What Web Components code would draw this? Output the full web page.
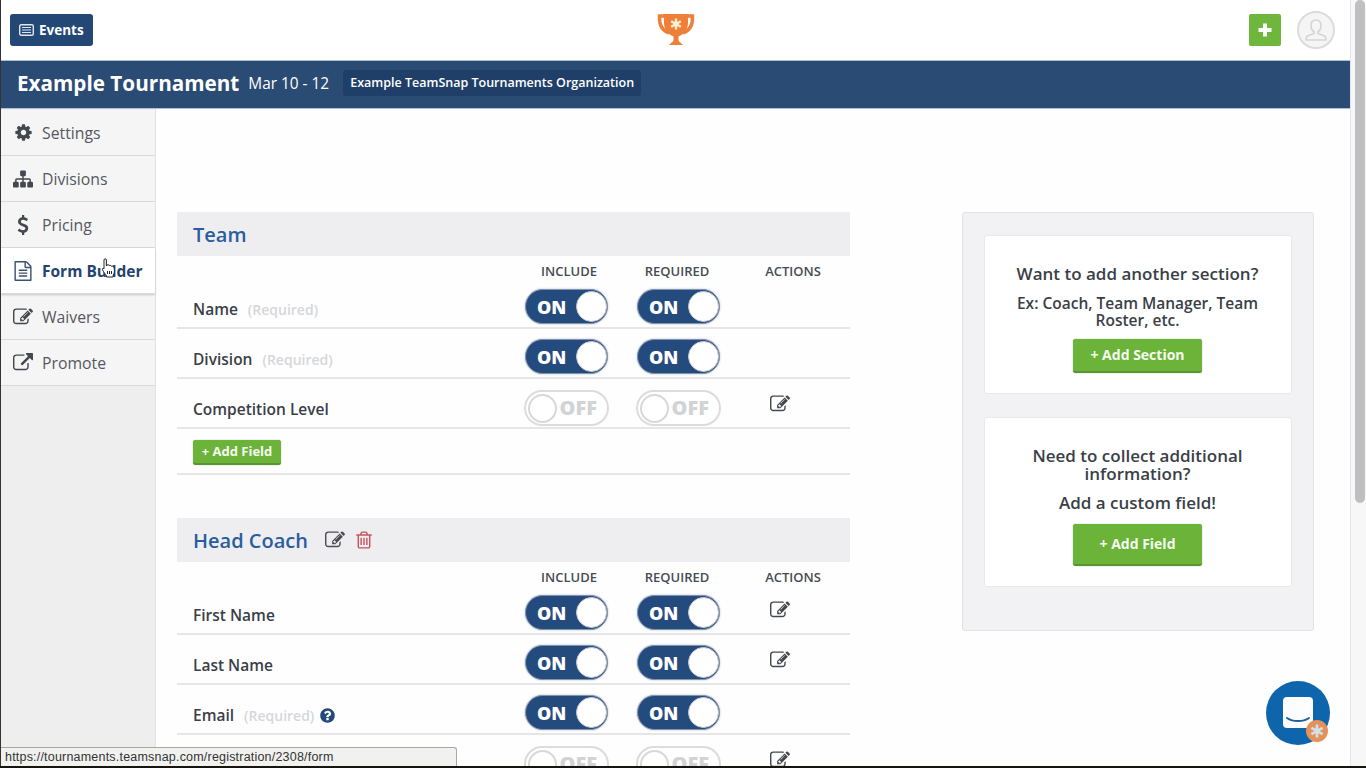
<!DOCTYPE html>
<html>
<head>
<meta charset="utf-8">
<title>Form Builder</title>
<style>
html, body { margin: 0; height: 100%; overflow: hidden; background: #fefeff; }
body { font-family: "Open Sans", "Noto Sans", sans-serif; color: #3a3f47; }
</style>
</head>
<body>
<tournament-app></tournament-app>

<script>
const ICONS = {
  cog: 'M1152 896q0-106-75-181t-181-75-181 75-75 181 75 181 181 75 181-75 75-181zm512-109v222q0 12-8 23t-20 13l-185 28q-19 54-39 91 35 50 107 138 10 12 10 25t-9 23q-27 37-99 108t-94 71q-12 0-26-9l-138-108q-44 23-91 38-16 136-29 186-7 28-36 28h-222q-14 0-24.500-8.500t-11.500-21.500l-28-184q-49-16-90-37l-141 107q-10 9-25 9-14 0-25-11-126-114-165-168-7-10-7-23 0-12 8-23 15-21 51-66.500t54-70.500q-27-50-41-99l-183-27q-13-2-21-12.500t-8-23.500v-222q0-12 8-23t19-13l186-28q14-46 39-92-40-57-107-138-10-12-10-24 0-10 9-23 26-36 98.500-107.500t94.500-71.500q13 0 26 10l138 107q44-23 91-38 16-136 29-186 7-28 36-28h222q14 0 24.500 8.500t11.500 21.500l28 184q49 16 90 37l142-107q9-9 24-9 13 0 25 10 129 119 165 170 7 8 7 22 0 12-8 23-15 21-51 66.500t-54 70.500q26 50 41 98l183 28q13 2 21 12.500t8 23.500z',
  sitemap: 'M1792 1248v320q0 40-28 68t-68 28h-320q-40 0-68-28t-28-68v-320q0-40 28-68t68-28h96v-192h-512v192h96q40 0 68 28t28 68v320q0 40-28 68t-68 28h-320q-40 0-68-28t-28-68v-320q0-40 28-68t68-28h96v-192h-512v192h96q40 0 68 28t28 68v320q0 40-28 68t-68 28h-320q-40 0-68-28t-28-68v-320q0-40 28-68t68-28h96v-192q0-52 38-90t90-38h512v-192h-96q-40 0-68-28t-28-68v-320q0-40 28-68t68-28h320q40 0 68 28t28 68v320q0 40-28 68t-68 28h-96v192h512q52 0 90 38t38 90v192h96q40 0 68 28t28 68z',
  usd: 'M1362 1185q0 153-99.500 263.500t-258.500 136.500v175q0 14-9 23t-23 9h-135q-13 0-22.500-9.500t-9.500-22.500v-175q-66-9-127.500-31t-101.500-44.500-74-48-46.500-37.500-17.500-18q-17-21-2-41l103-135q7-10 23-12 15-2 24 9l2 2q113 99 243 125 37 8 74 8 81 0 142.500-43t61.500-122q0-28-15-53t-33.500-42-58.500-37.500-66-32-80-32.500q-39-16-61.500-25t-61.500-26.500-62.500-31-56.500-35.500-53.500-42.500-43.500-49-35.500-58-21-66.500-8.500-78q0-138 98-242t255-134v-180q0-13 9.500-22.500t22.500-9.500h135q14 0 23 9t9 23v176q57 6 110.500 23t87 33.500 63.500 37.500 39 29 15 14q17 18 5 38l-81 146q-8 15-23 16-14 3-27-7-3-3-14.500-12t-39-26.500-58.500-32-74.500-26-85.500-11.500q-95 0-155 43t-60 111q0 26 8.500 48t29.500 41.500 39.500 33 56 31 60.500 27 70 27.500q53 20 81 31.500t76 35 75.500 42.500 62 50 53 63.500 31.500 76.500 13 94z',
  file: 'M1596 380q28 28 48 76t20 88v1152q0 40-28 68t-68 28h-1344q-40 0-68-28t-28-68v-1600q0-40 28-68t68-28h896q40 0 88 20t76 48zm-444-244v376h376q-10-29-22-41l-313-313q-12-12-41-22zm384 1528v-1024h-416q-40 0-68-28t-28-68v-416h-768v1536h1280zm-1024-864q0-14 9-23t23-9h704q14 0 23 9t9 23v64q0 14-9 23t-23 9h-704q-14 0-23-9t-9-23v-64zm736 224q14 0 23 9t9 23v64q0 14-9 23t-23 9h-704q-14 0-23-9t-9-23v-64q0-14 9-23t23-9h704zm0 256q14 0 23 9t9 23v64q0 14-9 23t-23 9h-704q-14 0-23-9t-9-23v-64q0-14 9-23t23-9h704z',
  edit: 'M888 1184l116-116-152-152-116 116v56h96v96h56zm440-720q-16-16-33 1l-350 350q-17 17-1 33t33-1l350-350q17-17 1-33zm80 594v190q0 119-84.500 203.500t-203.500 84.500h-832q-119 0-203.500-84.500t-84.500-203.500v-832q0-119 84.500-203.500t203.500-84.500h832q63 0 117 25 15 7 18 23 3 17-9 29l-49 49q-14 14-32 8-23-6-45-6h-832q-66 0-113 47t-47 113v832q0 66 47 113t113 47h832q66 0 113-47t47-113v-126q0-13 9-22l64-64q15-15 35-7t20 29zm-96-738l288 288-672 672h-288v-288zm444 132l-92 92-288-288 92-92q28-28 68-28t68 28l152 152q28 28 28 68t-28 68z',
  link: 'M1408 928v320q0 119-84.500 203.500t-203.500 84.500h-832q-119 0-203.500-84.500t-84.500-203.500v-832q0-119 84.500-203.500t203.500-84.500h704q14 0 23 9t9 23v64q0 14-9 23t-23 9h-704q-66 0-113 47t-47 113v832q0 66 47 113t113 47h832q66 0 113-47t47-113v-320q0-14 9-23t23-9h64q14 0 23 9t9 23zm384-864v512q0 26-19 45t-45 19-45-19l-176-176-652 652q-10 10-23 10t-23-10l-114-114q-10-10-10-23t10-23l652-652-176-176q-19-19-19-45t19-45 45-19h512q26 0 45 19t19 45z',
  trash: 'M704 736v576q0 14-9 23t-23 9h-64q-14 0-23-9t-9-23v-576q0-14 9-23t23-9h64q14 0 23 9t9 23zm256 0v576q0 14-9 23t-23 9h-64q-14 0-23-9t-9-23v-576q0-14 9-23t23-9h64q14 0 23 9t9 23zm256 0v576q0 14-9 23t-23 9h-64q-14 0-23-9t-9-23v-576q0-14 9-23t23-9h64q14 0 23 9t9 23zm128 724v-948h-896v948q0 22 7 40.500t14.500 27 10.500 8.500h832q3 0 10.500-8.500t14.500-27 7-40.500zm-672-1076h448l-48-117q-7-9-17-11h-317q-10 2-17 11zm928 32v64q0 14-9 23t-23 9h-96v948q0 83-47 143.500t-113 60.500h-832q-66 0-113-58.500t-47-141.500v-952h-96q-14 0-23-9t-9-23v-64q0-14 9-23t23-9h309l70-167q15-37 54-63t79-26h320q40 0 79 26t54 63l70 167h309q14 0 23 9t9 23z',
  help: 'M1024 1376v-192q0-14-9-23t-23-9h-192q-14 0-23 9t-9 23v192q0 14 9 23t23 9h192q14 0 23-9t9-23zm256-672q0-88-55.500-163t-138.500-116-170-41q-243 0-371 213-15 24 8 42l132 100q7 6 19 6 16 0 25-12 53-68 86-92 34-24 86-24 48 0 85.500 26t37.500 59q0 38-20 61t-68 45q-63 28-115.500 86.500t-52.500 125.500v36q0 14 9 23t23 9h192q14 0 23-9t9-23q0-19 21.500-49.500t54.500-49.500q32-18 49-28.500t46-35 44.500-48 28-60.500 12.500-81zm384 192q0 209-103 385.500t-279.500 279.500-385.500 103-385.500-103-279.500-279.500-103-385.500 103-385.500 279.500-279.500 385.500-103 385.500 103 279.500 279.500 103 385.500z'
};

class FaIcon extends HTMLElement {
  connectedCallback() {
    const size = this.getAttribute('size') || 20;
    const name = this.getAttribute('name');
    this.attachShadow({mode: 'open'}).innerHTML = `<style>
      :host { display: inline-flex; line-height: 0; color: inherit; flex: none; }
    </style>
    <svg width="${size}" height="${size}" viewBox="0 0 1792 1792"><path fill="currentColor" d="${ICONS[name]}"/></svg>`;
  }
}
customElements.define('fa-icon', FaIcon);

class ToggleSwitch extends HTMLElement {
  connectedCallback() {
    const on = this.hasAttribute('on');
    this.attachShadow({mode: 'open'}).innerHTML = `<style>
      :host { display: block; width: ${on ? 83 : 85}px; margin-left: ${on ? 0 : -1}px; margin-top: ${on ? 0 : 1}px; }
      .sw { box-sizing: border-box; height: ${on ? 35 : 36}px; border-radius: 19px; display: flex; align-items: center;
        justify-content: space-between; font: 800 ${on ? 18 : 20}px/1 "Open Sans", sans-serif; }
      .on { background: #234b7e; border: 1.5px solid #8b93a3; padding: 0 0 0 11px; color: #fff; box-shadow: 0 0 2px #9fb6d6; }
      .off { background: #fff; border: 2px solid #dcdcde; padding: 0 10px 0 2px; color: #d2d3d5; }
      .knob { width: 31px; height: 31px; border-radius: 50%; background: #fff; flex: none; box-sizing: border-box; }
      .on .knob { border: 1px solid #c4c8d0; }
      .off .knob { width: 29px; height: 29px; border: 2px solid #d8d8da; }
    </style>
    ${on ? '<div class="sw on"><span>ON</span><span class="knob"></span></div>'
         : '<div class="sw off"><span class="knob"></span><span>OFF</span></div>'}`;
  }
}
customElements.define('toggle-switch', ToggleSwitch);

class ActionButton extends HTMLElement {
  connectedCallback() {
    const w = this.getAttribute('w'), h = this.getAttribute('h'), fs = this.getAttribute('fs') || 14;
    this.attachShadow({mode: 'open'}).innerHTML = `<style>
      :host { display: inline-block; }
      div { box-sizing: border-box; width: ${w}px; height: ${h}px; background: #6cb33a; color: #f6fbf0; border-radius: 3px;
        border-bottom: 2px solid #5a9630; display: flex; align-items: center; justify-content: center; white-space: pre;
        font: 700 ${fs}px/1 "Open Sans", sans-serif; box-shadow: 0 0 1px #5a7a40; }
    </style><div><slot></slot></div>`;
  }
}
customElements.define('action-button', ActionButton);

class NavItem extends HTMLElement {
  connectedCallback() {
    const active = this.hasAttribute('active');
    this.attachShadow({mode: 'open'}).innerHTML = `<style>
      :host { display: block; }
      a { box-sizing: border-box; height: 46px; display: flex; align-items: center; padding-left: 12px;
        font-size: ${active ? 15.5 : 15.8}px; color: ${active ? '#24436f' : '#55585e'}; font-weight: ${active ? 700 : 400};
        background: ${active ? '#fff' : '#f5f5f6'}; border-bottom: 1px solid #d9d9db;
        ${active ? 'box-shadow: 0 1px 2px #c8c8ca; position: relative;' : ''} }
      fa-icon { width: 20px; justify-content: center; margin-right: 9px; color: ${active ? '#3b5270' : '#44474d'}; }
    </style><a><fa-icon name="${this.getAttribute('icon')}" size="${this.getAttribute('size') || 20}"></fa-icon><slot></slot></a>`;
  }
}
customElements.define('nav-item', NavItem);

const ROW_GRID = 'display: grid; grid-template-columns: 348px 112px 112px 1fr;';

class FieldRow extends HTMLElement {
  connectedCallback() {
    const t = v => v === '1' ? '<toggle-switch on></toggle-switch>' : '<toggle-switch></toggle-switch>';
    const req = this.hasAttribute('required') ? '<small>(Required)</small>' : '';
    const help = this.hasAttribute('help') ? '<fa-icon class="q" name="help" size="17"></fa-icon>' : '';
    const edit = this.hasAttribute('edit') ? '<fa-icon class="e" name="edit" size="20"></fa-icon>' : '';
    this.attachShadow({mode: 'open'}).innerHTML = `<style>
      :host { display: block; }
      .row { ${ROW_GRID} box-sizing: border-box; height: 50px; padding-top: 10px; border-bottom: 2px solid #e6e6e8; align-items: start; }
      .name { padding-left: 16px; font-size: 15.5px; font-weight: 600; color: #3a3f47; display: flex; align-items: center; height: 20px; margin-top: 10px; white-space: nowrap; }
      small { font-size: 14px; font-weight: 600; color: #d6d7da; margin-left: 10px; }
      .q { color: #24497a; margin-left: 5px; }
      .e { color: #44474d; margin: 5px 0 0 21px; }
    </style>
    <div class="row">
      <div class="name"><slot></slot>${req}${help}</div>
      <div>${t(this.getAttribute('inc'))}</div>
      <div>${t(this.getAttribute('rq'))}</div>
      <div>${edit}</div>
    </div>`;
  }
}
customElements.define('field-row', FieldRow);

class FormSection extends HTMLElement {
  connectedCallback() {
    const tools = this.hasAttribute('tools') ? `
      <fa-icon class="ed" name="edit" size="20"></fa-icon><fa-icon class="tr" name="trash" size="20"></fa-icon>` : '';
    this.attachShadow({mode: 'open'}).innerHTML = `<style>
      :host { display: block; }
      header { height: 44px; background: #eeeef0; display: flex; align-items: center; padding-left: 16px; }
      h2 { margin: 0; font-size: 20px; font-weight: 600; color: #2a5d9e; }
      .ed { color: #4a4d52; margin-left: 17px; }
      .tr { color: #c9545e; margin-left: 9px; }
      .cols { ${ROW_GRID} box-sizing: border-box; height: 23px; padding-top: 6px; align-items: start; font-size: 13px; line-height: 18px; font-weight: 600; color: #474b52; }
      .cols span { text-align: center; }
      .cols .i { width: 88px; } .cols .r { width: 80px; } .cols .a { width: 88px; }
    </style>
    <header><h2>${this.getAttribute('title')}</h2>${tools}</header>
    <div class="cols"><i></i><span class="i">INCLUDE</span><span class="r">REQUIRED</span><span class="a">ACTIONS</span></div>
    <slot></slot>`;
  }
}
customElements.define('form-section', FormSection);

class HelpCard extends HTMLElement {
  connectedCallback() {
    this.attachShadow({mode: 'open'}).innerHTML = `<style>
      :host { display: block; }
      div { box-sizing: border-box; background: #fff; border: 1px solid #e8e8ea; border-radius: 3px; text-align: center;
        height: ${this.getAttribute('h')}px; padding: ${this.getAttribute('pad')}px 15px 0 14px; color: #3a3f47; font-weight: 600; }
    </style><div><slot></slot></div>`;
  }
}
customElements.define('help-card', HelpCard);

class TopBar extends HTMLElement {
  connectedCallback() {
    this.attachShadow({mode: 'open'}).innerHTML = `<style>
      :host { display: flex; height: 60px; flex: none; align-items: center; background: #fff; padding: 0 15px 0 9px; position: relative; }
      .events { box-sizing: border-box; width: 83px; height: 32px; background: #234876; border-radius: 3px; color: #fff; display: flex;
        align-items: center; gap: 5px; padding-left: 9px; font: 700 13.5px/1 "Open Sans", sans-serif; }
      .events span { margin-top: 2px; }
      .mid { flex: 1; display: flex; justify-content: center; margin-left: 9px; }
      .plus { width: 32px; height: 32px; background: #6fb63c; border-radius: 2px; display: flex; align-items: center; justify-content: center; }
      .avatar { box-sizing: border-box; width: 38px; height: 38px; margin-left: 16px; border-radius: 50%; border: 2px solid #dcdcde; background: #f5f5f6;
        display: flex; align-items: center; justify-content: center; }
    </style>
    <div class="events">
      <svg width="15" height="12" viewBox="0 0 15 12"><rect x=".7" y=".7" width="13.600" height="10.600" rx="1.500" fill="none" stroke="#dfe6f0" stroke-width="1.400"/><path d="M3 3.500h9M3 6h9M3 8.500h9" stroke="#dfe6f0" stroke-width="1.200"/></svg>
      <span>Events</span>
    </div>
    <div class="mid">
      <svg width="40" height="34" viewBox="0 0 40 34">
        <path d="M9 3H3.500C3 13 7 18 13 20M31 3h5.500C37 13 33 18 27 20" fill="none" stroke="#ee7f38" stroke-width="3.400"/>
        <path d="M8 1h24v9c0 8-6 12-9.500 13.500V27c0 2 3 3 4.500 5H13c1.500-2 4.500-3 4.500-5v-3.500C14 22 8 18 8 10z" fill="#ee7f38"/>
        <path d="M20 5.500v11M15.200 8.200l9.600 5.600M24.800 8.200l-9.600 5.600" stroke="#fdf0d4" stroke-width="2.400"/>
      </svg>
    </div>
    <div class="plus"><svg width="16" height="16" viewBox="0 0 16 16"><path d="M8 1.500v13M1.500 8h13" stroke="#fff" stroke-width="4"/></svg></div>
    <div class="avatar"><svg width="24" height="26" viewBox="0 0 24 26" fill="none" stroke="#d4d4d6" stroke-width="1.600"><path d="M12 3c-3 0-5 2.200-5 5.500 0 2.500 1 5 3 6v2L3.500 19c-1 .5-1.500 1.500-1.500 4h20c0-2.500-.5-3.500-1.500-4L14 16.500v-2c2-1 3-3.500 3-6C17 5.200 15 3 12 3z"/></svg></div>`;
  }
}
customElements.define('top-bar', TopBar);

class TitleBar extends HTMLElement {
  connectedCallback() {
    this.attachShadow({mode: 'open'}).innerHTML = `<style>
      :host { display: flex; align-items: center; box-sizing: border-box; height: 49px; flex: none; background: #2a4b73;
        border-top: 1px solid #a9c0d8; border-bottom: 1px solid #a9c0d8; padding: 0 0 4px 16px; color: #fff; white-space: nowrap; }
      b { font-size: 20.7px; font-weight: 700; }
      span { font-size: 15.4px; margin-left: 9px; padding-top: 2px; }
      em { font: 600 12.5px/26px "Open Sans", sans-serif; background: #1f3f69; border-radius: 3px; padding: 0 7px; margin-left: 14px; }
    </style>
    <b>Example Tournament</b><span>Mar 10 - 12</span><em>Example TeamSnap Tournaments Organization</em>`;
  }
}
customElements.define('title-bar', TitleBar);

class ChatLauncher extends HTMLElement {
  connectedCallback() {
    this.attachShadow({mode: 'open'}).innerHTML = `<style>
      :host { position: absolute; left: 1265px; top: 681px; width: 66px; height: 66px; }
    </style>
    <svg width="66" height="66" viewBox="0 0 66 66">
      <circle cx="33" cy="32" r="32" fill="#0f65ab"/>
      <rect x="18" y="16" width="30" height="31" rx="4" fill="#fdfdff"/>
      <path d="M22 37c6 4 16 4 22 0" fill="none" stroke="#1b5f9c" stroke-width="2" stroke-linecap="round"/>
      <circle cx="52" cy="50" r="11" fill="#e5925a"/>
      <path d="M52 43.500v13M46.400 46.800l11.200 6.400M57.600 46.800l-11.200 6.400" stroke="#d3e2ea" stroke-width="2.600"/>
    </svg>`;
  }
}
customElements.define('chat-launcher', ChatLauncher);

class StatusTip extends HTMLElement {
  connectedCallback() {
    this.attachShadow({mode: 'open'}).innerHTML = `<style>
      :host { position: absolute; left: 1px; top: 747px; box-sizing: border-box; width: 456px; height: 19px; background: #f1f1ef;
        border: 1px solid #a8a8a8; border-left: 0; border-bottom: 0; border-radius: 0 3px 0 0; padding-left: 4px;
        font: 12.5px/18px "Liberation Sans", Arial, sans-serif; color: #333; letter-spacing: .2px; }
    </style><slot></slot>`;
  }
}
customElements.define('status-tip', StatusTip);

class HandCursor extends HTMLElement {
  connectedCallback() {
    this.attachShadow({mode: 'open'}).innerHTML = `<style>
      :host { position: absolute; left: 101px; top: 258px; width: 16px; height: 20px; line-height: 0; }
    </style>
    <svg width="16" height="20" viewBox="0 0 16 20"><path d="M3 2c0-1.600 2.400-1.600 2.400 0v6l.6-1c1-.6 2-.2 2.200.6.8-.6 2-.2 2.200.7 1-.4 2.200 0 2.400 1l.4 1.200c.6 2 .2 5-1 6.500v2H5.500v-1.500C4 16 3 14.500 1.500 12 .8 10.800 2 9.800 3 10.800z" fill="#fff" stroke="#222" stroke-width="1"/><path d="M6.500 13v3M8.500 13v3M10.500 13v3" stroke="#222" stroke-width="1"/></svg>`;
  }
}
customElements.define('hand-cursor', HandCursor);

class TournamentApp extends HTMLElement {
  connectedCallback() {
    this.attachShadow({mode: 'open'}).innerHTML = `<style>
      :host { display: flex; flex-direction: column; height: 768px; width: 1366px; position: relative; overflow: hidden; background: #fefeff; }
      .window { flex: 1; min-height: 0; display: flex; }
      .page { flex: 1; min-width: 0; display: flex; flex-direction: column; border-left: 1px solid #333; }
      .body { flex: 1; min-height: 0; display: flex; overflow: hidden; }
      nav { width: 154px; flex: none; background: #eeeeef; border-right: 1px solid #e2e2e4; padding-top: 1px; }
      main { flex: 1; display: flex; padding: 103px 0 0 21px; align-items: flex-start; min-width: 0; }
      .form { width: 673px; flex: none; }
      .gap { height: 43px; }
      .add { height: 46px; box-sizing: border-box; padding: 11px 0 0 16px; border-bottom: 2px solid #e6e6e8; line-height: 0; }
      aside { box-sizing: border-box; width: 352px; flex: none; margin-left: 112px; height: 419px; background: #f2f2f4; border: 1px solid #e2e2e4; border-radius: 3px;
        padding: 22px 21px; display: flex; flex-direction: column; gap: 23px; }
      h3 { margin: 0 0 12px; font-size: 17px; line-height: 18px; font-weight: 600; }
      p { margin: 0 0 10px; font-size: 15.5px; line-height: 17px; font-weight: 600; }
      p.sub { font-size: 17px; line-height: 20px; margin: -2px 0 11px; }
      .scroll { width: 16px; flex: none; background: #f7f7f8; border-left: 1px solid #e6e6e8; box-sizing: border-box; padding: 0 1px 0 4px; }
      .thumb { height: 503px; background: #bfbfc1; border-radius: 5px; }
      .desk { height: 2px; flex: none; background: #17150f; }
    </style>
    <div class="window">
      <div class="page">
        <top-bar></top-bar>
        <title-bar></title-bar>
        <div class="body">
          <nav>
            <nav-item icon="cog" size="19">Settings</nav-item>
            <nav-item icon="sitemap">Divisions</nav-item>
            <nav-item icon="usd" size="22">Pricing</nav-item>
            <nav-item icon="file" active>Form Builder</nav-item>
            <nav-item icon="edit" size="22">Waivers</nav-item>
            <nav-item icon="link" size="22">Promote</nav-item>
          </nav>
          <main>
            <div class="form">
              <form-section title="Team">
                <field-row inc="1" rq="1" required>Name</field-row>
                <field-row inc="1" rq="1" required>Division</field-row>
                <field-row inc="0" rq="0" edit>Competition Level</field-row>
                <div class="add"><action-button w="88" h="25" fs="13">+ Add Field</action-button></div>
              </form-section>
              <div class="gap"></div>
              <form-section title="Head Coach" tools>
                <field-row inc="1" rq="1" edit>First Name</field-row>
                <field-row inc="1" rq="1" edit>Last Name</field-row>
                <field-row inc="1" rq="1" required help>Email</field-row>
                <field-row inc="0" rq="0" edit></field-row>
              </form-section>
            </div>
            <aside>
              <help-card h="159" pad="29">
                <h3>Want to add another section?</h3>
                <p>Ex: Coach, Team Manager, Team Roster, etc.</p>
                <action-button w="129" h="34">+ Add Section</action-button>
              </help-card>
              <help-card h="170" pad="29">
                <h3>Need to collect additional information?</h3>
                <p class="sub">Add a custom field!</p>
                <action-button w="129" h="42">+ Add Field</action-button>
              </help-card>
            </aside>
          </main>
        </div>
      </div>
      <div class="scroll"><div class="thumb"></div></div>
    </div>
    <div class="desk"></div>
    <hand-cursor></hand-cursor>
    <status-tip>https://tournaments.teamsnap.com/registration/2308/form</status-tip>
    <chat-launcher></chat-launcher>`;
  }
}
customElements.define('tournament-app', TournamentApp);
</script>
</body>
</html>
